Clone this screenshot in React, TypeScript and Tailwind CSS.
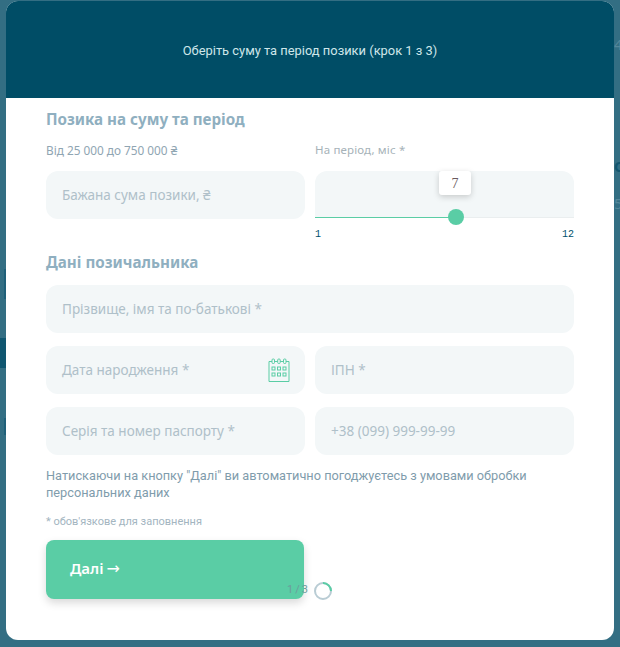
const heading = "font-['Noto_Sans',sans-serif] text-[15.2px] leading-5 font-bold text-[#8fafc0]";

function Field({ label, className = "", children }: { label: string; className?: string; children?: React.ReactNode }) {
  return (
    <div className={`relative flex h-12 items-center rounded-xl bg-[#f3f7f8] pl-4 ${className}`}>
      <span className="font-['Noto_Sans',sans-serif] text-[13.5px] text-[#afc0c9]">{label}</span>
      {children}
    </div>
  );
}

function CalendarIcon() {
  return (
    <svg className="absolute left-[222px] top-[12px]" width="22" height="24" viewBox="0 0 22 24" fill="none" stroke="#5acda5" strokeWidth="1">
      <path d="M1 3.5h20v20H1z" />
      <rect x="4" y="1" width="2.5" height="4.5" rx="1" fill="#f3f7f8" />
      <rect x="9.7" y="1" width="2.5" height="4.5" rx="1" fill="#f3f7f8" />
      <rect x="15.5" y="1" width="2.5" height="4.5" rx="1" fill="#f3f7f8" />
      <rect x="4" y="9" width="3" height="3" />
      <rect x="9.5" y="9" width="3" height="3" />
      <rect x="15" y="9" width="3" height="3" />
      <rect x="4" y="15" width="3" height="3" />
      <rect x="9.5" y="15" width="3" height="3" />
      <rect x="15" y="15" width="3" height="3" />
    </svg>
  );
}

export default function App() {
  return (
    <div className="relative h-[647px] w-[620px] overflow-hidden bg-[#336e83] pt-px">
      {/* page behind the overlay */}
      <div className="absolute left-0 top-[338px] h-[30px] w-[6px] bg-[#0f5670]" />
      <div className="absolute left-[4px] top-[269px] h-[30px] w-[2px] bg-[#1f6079]" />
      <div className="absolute left-[4px] top-[418px] h-[17px] w-[2px] bg-[#1f6079]" />
      <span className="absolute left-[614px] top-[33px] font-['Noto_Sans',sans-serif] text-[15px] text-[#55879a]">4</span>
      <span className="absolute left-[614px] top-[155px] font-['Noto_Sans',sans-serif] text-[15px] font-bold text-[#12566f]">О</span>
      <span className="absolute left-[614px] top-[192px] font-['Noto_Sans',sans-serif] text-[15px] text-[#55879a]">5</span>

      <div className="relative ml-[6px] h-[639px] w-[608px] overflow-hidden rounded-xl bg-white">
        <header className="flex h-[97px] items-center justify-center bg-[#004d66] pt-[3px]">
          <h2 className="font-['Roboto',sans-serif] text-[12.9px] text-[#cfe6ea]">Оберіть суму та період позики (крок 1 з 3)</h2>
        </header>

        <div className="px-10">
          <h3 className={`mt-[11px] ${heading}`}>Позика на суму та період</h3>

          <div className="mt-[11px] grid grid-cols-[259px_259px] gap-x-[10px]">
            <p className="font-['Noto_Sans',sans-serif] text-[11.8px] leading-5 text-[#8fa5b2]">Від 25 000 до 750 000 ₴</p>
            <p className="font-['Noto_Sans',sans-serif] text-[11.5px] leading-5 tracking-[0.15px] text-[#a6b2b8]">На період, міс *</p>
          </div>

          <div className="mt-[11px] grid grid-cols-[259px_259px] gap-x-[10px]">
            <Field label="Бажана сума позики, ₴" />
            <div>
              <div className="relative h-[47px] rounded-t-xl bg-[#f3f7f8]">
                <div className="absolute bottom-0 left-0 h-px w-full bg-[#eaeeef]" />
                <div className="absolute bottom-0 left-0 h-px w-[141px] bg-[#5acda5]" />
                <div className="absolute left-[124px] top-0 flex h-6 w-8 items-center justify-center rounded-[3px] bg-white font-['Liberation_Serif',serif] text-[14px] text-[#6a5a5e] shadow-[0_2px_6px_rgba(0,0,0,0.18)]">7</div>
                <div className="absolute left-[133px] top-[38px] h-4 w-4 rounded-full bg-[#5acda5]" />
              </div>
              <div className="mt-[11px] flex justify-between font-['Liberation_Mono',monospace] text-[10px] leading-3 text-[#00506b]">
                <span>1</span>
                <span>12</span>
              </div>
            </div>
          </div>

          <h3 className={`mt-[11px] ${heading}`}>Дані позичальника</h3>

          <div className="mt-[13px] grid grid-cols-[259px_259px] gap-x-[10px] gap-y-[13px]">
            <Field label="Прізвище, імя та по-батькові *" className="col-span-2" />
            <Field label="Дата народження *">
              <CalendarIcon />
            </Field>
            <Field label="ІПН *" />
            <Field label="Серія та номер паспорту *" />
            <Field label="+38 (099) 999-99-99" />
          </div>

          <p className="mt-[12px] font-['Roboto',sans-serif] text-[12.75px] leading-[17px] text-[#7f9cac]">
            Натискаючи на кнопку "Далі" ви автоматично погоджуєтесь з умовами обробки персональних даних
          </p>
          <p className="mt-[13px] font-['Roboto',sans-serif] text-[11px] leading-4 text-[#a3b5bf]">* обов'язкове для заповнення</p>

          <button className="mt-[10px] flex h-[59px] w-[258px] items-center gap-[3px] rounded-lg bg-[#5acda5] pb-[2px] pl-6 font-['Noto_Sans',sans-serif] text-[15px] font-semibold text-white shadow-[0_4px_8px_rgba(0,0,0,0.15)]">
            Далі
            <span className="font-['DejaVu_Sans',sans-serif] text-[16px] leading-none font-normal">→</span>
          </button>
        </div>

        <span className="absolute left-[281px] top-[583px] font-['Roboto',sans-serif] text-[11px] leading-3 tracking-[2px] text-[#6d9c9c]">1/3</span>
        <svg className="absolute left-[307px] top-[580px]" width="20" height="20" viewBox="0 0 20 20" fill="none" strokeWidth="2">
          <circle cx="10" cy="10" r="8" stroke="#b9ccd4" />
          <path d="M10 2a8 8 0 0 1 8 8" stroke="#5acda5" />
        </svg>
      </div>
    </div>
  );
}
